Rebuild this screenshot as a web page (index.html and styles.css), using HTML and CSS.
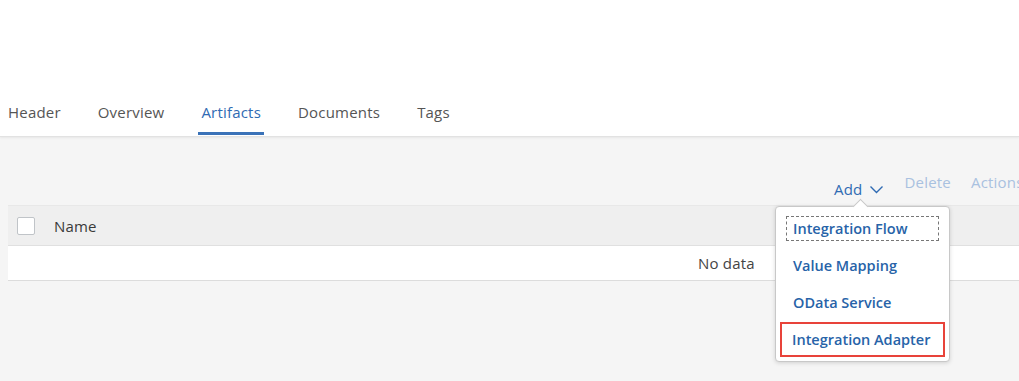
FILE: index.html
```html
<!DOCTYPE html>
<html lang="en">
<head>
  <meta charset="UTF-8">
  <title>Package Artifacts</title>
  <link rel="stylesheet" href="styles.css">
</head>
<body>

  <div class="top">
    <nav class="tabs">
      <span class="tab">Header</span>
      <span class="tab">Overview</span>
      <span class="tab selected">Artifacts</span>
      <span class="tab">Documents</span>
      <span class="tab">Tags</span>
    </nav>
  </div>

  <div class="content">
    <div class="toolbar">
      <span class="add">Add
        <svg class="chev" width="15" height="9" viewBox="0 0 15 9"><path d="M1.5 1.5 L7.5 7.5 L13.5 1.5" fill="none" stroke="currentColor" stroke-width="1.4"/></svg>
      </span>
      <span class="disabled">Delete</span>
      <span class="disabled">Actions</span>
    </div>

    <div class="table">
      <div class="thead">
        <span class="check"></span>
        <span class="col">Name</span>
      </div>
      <div class="nodata">No data</div>
    </div>

    <div class="menu">
      <div class="item focused">Integration Flow</div>
      <div class="item">Value Mapping</div>
      <div class="item">OData Service</div>
      <div class="item marked">Integration Adapter</div>
    </div>
  </div>

</body>
</html>
```
FILE: styles.css
```css
body {
  margin: 0;
  font-family: "Open Sans", sans-serif;
  font-size: 15px;
  letter-spacing: 0.2px;
  color: #32363a;
  background: #f5f5f5;
  overflow: hidden;
}
.top {
  background: #fff;
  height: 136px;
  display: flex;
  align-items: flex-end;
  border-bottom: 1px solid #e2e2e2;
  box-shadow: 0 1px 2px rgba(0, 0, 0, 0.06);
}
.tabs {
  display: flex;
  gap: 33px;
  padding-left: 6px;
}
.tab {
  padding: 0 2px;
  line-height: 30px;
  color: #555;
  border-bottom: 3px solid transparent;
  box-sizing: border-box;
  height: 38px;
  margin-bottom: 1px;
  letter-spacing: 0.2px;
}
.tab.selected {
  color: #2f6bb3;
  border-bottom-color: #3a72b8;
  padding: 0 3px;
  margin: 0 -1px 1px;
}
.content {
  position: relative;
  height: 245px;
}
.toolbar {
  display: flex;
  gap: 20px;
  padding: 35px 0 0 834px;
  height: 68px;
  box-sizing: border-box;
  white-space: nowrap;
  line-height: 20px;
}
.add {
  color: #2f6bb3;
  display: flex;
  align-items: center;
  gap: 7px;
}
.chev {
  margin-top: 1px;
}
.disabled {
  color: #a9c1e0;
}
.table {
  margin-left: 8px;
}
.thead {
  display: flex;
  align-items: center;
  height: 39px;
  background: #efefef;
  border-top: 1px solid #e8e8e8;
  border-bottom: 1px solid #e0e0e0;
}
.check {
  width: 16px;
  height: 16px;
  border: 1px solid #c0c4c8;
  border-radius: 2px;
  background: #fff;
  margin: 0 19px 0 9px;
}
.col {
  color: #3a3a3a;
}
.nodata {
  background: #fff;
  height: 34px;
  line-height: 34px;
  padding-left: 690px;
  border-bottom: 1px solid #dcdcdc;
  color: #444;
}
.menu {
  position: absolute;
  left: 775px;
  top: 69px;
  width: 165px;
  padding: 9px 4px 4px 4px;
  background: #fff;
  border: 1px solid #c8c8c8;
  border-radius: 4px;
  box-shadow: 0 1px 4px rgba(0, 0, 0, 0.15);
  display: flex;
  flex-direction: column;
  gap: 11px;
  letter-spacing: 0;
}
.menu::before {
  content: "";
  position: absolute;
  left: 79px;
  top: -6px;
  width: 10px;
  height: 10px;
  background: #fff;
  border-left: 1px solid #c8c8c8;
  border-top: 1px solid #c8c8c8;
  transform: rotate(45deg);
}
.item {
  color: #2763a8;
  font-weight: 600;
  font-size: 14.5px;
  height: 25px;
  line-height: 25px;
  padding-left: 12px;
  box-sizing: border-box;
  margin: 1px 1px 0;
}
.item.focused {
  border: 1px dashed #777;
  margin: 0 6px;
  padding-left: 6px;
  line-height: 23px;
}
.item.marked {
  border: 2px solid #e8433a;
  height: 35px;
  line-height: 31px;
  padding-left: 10px;
  margin: -4px 0 0;
}
```
